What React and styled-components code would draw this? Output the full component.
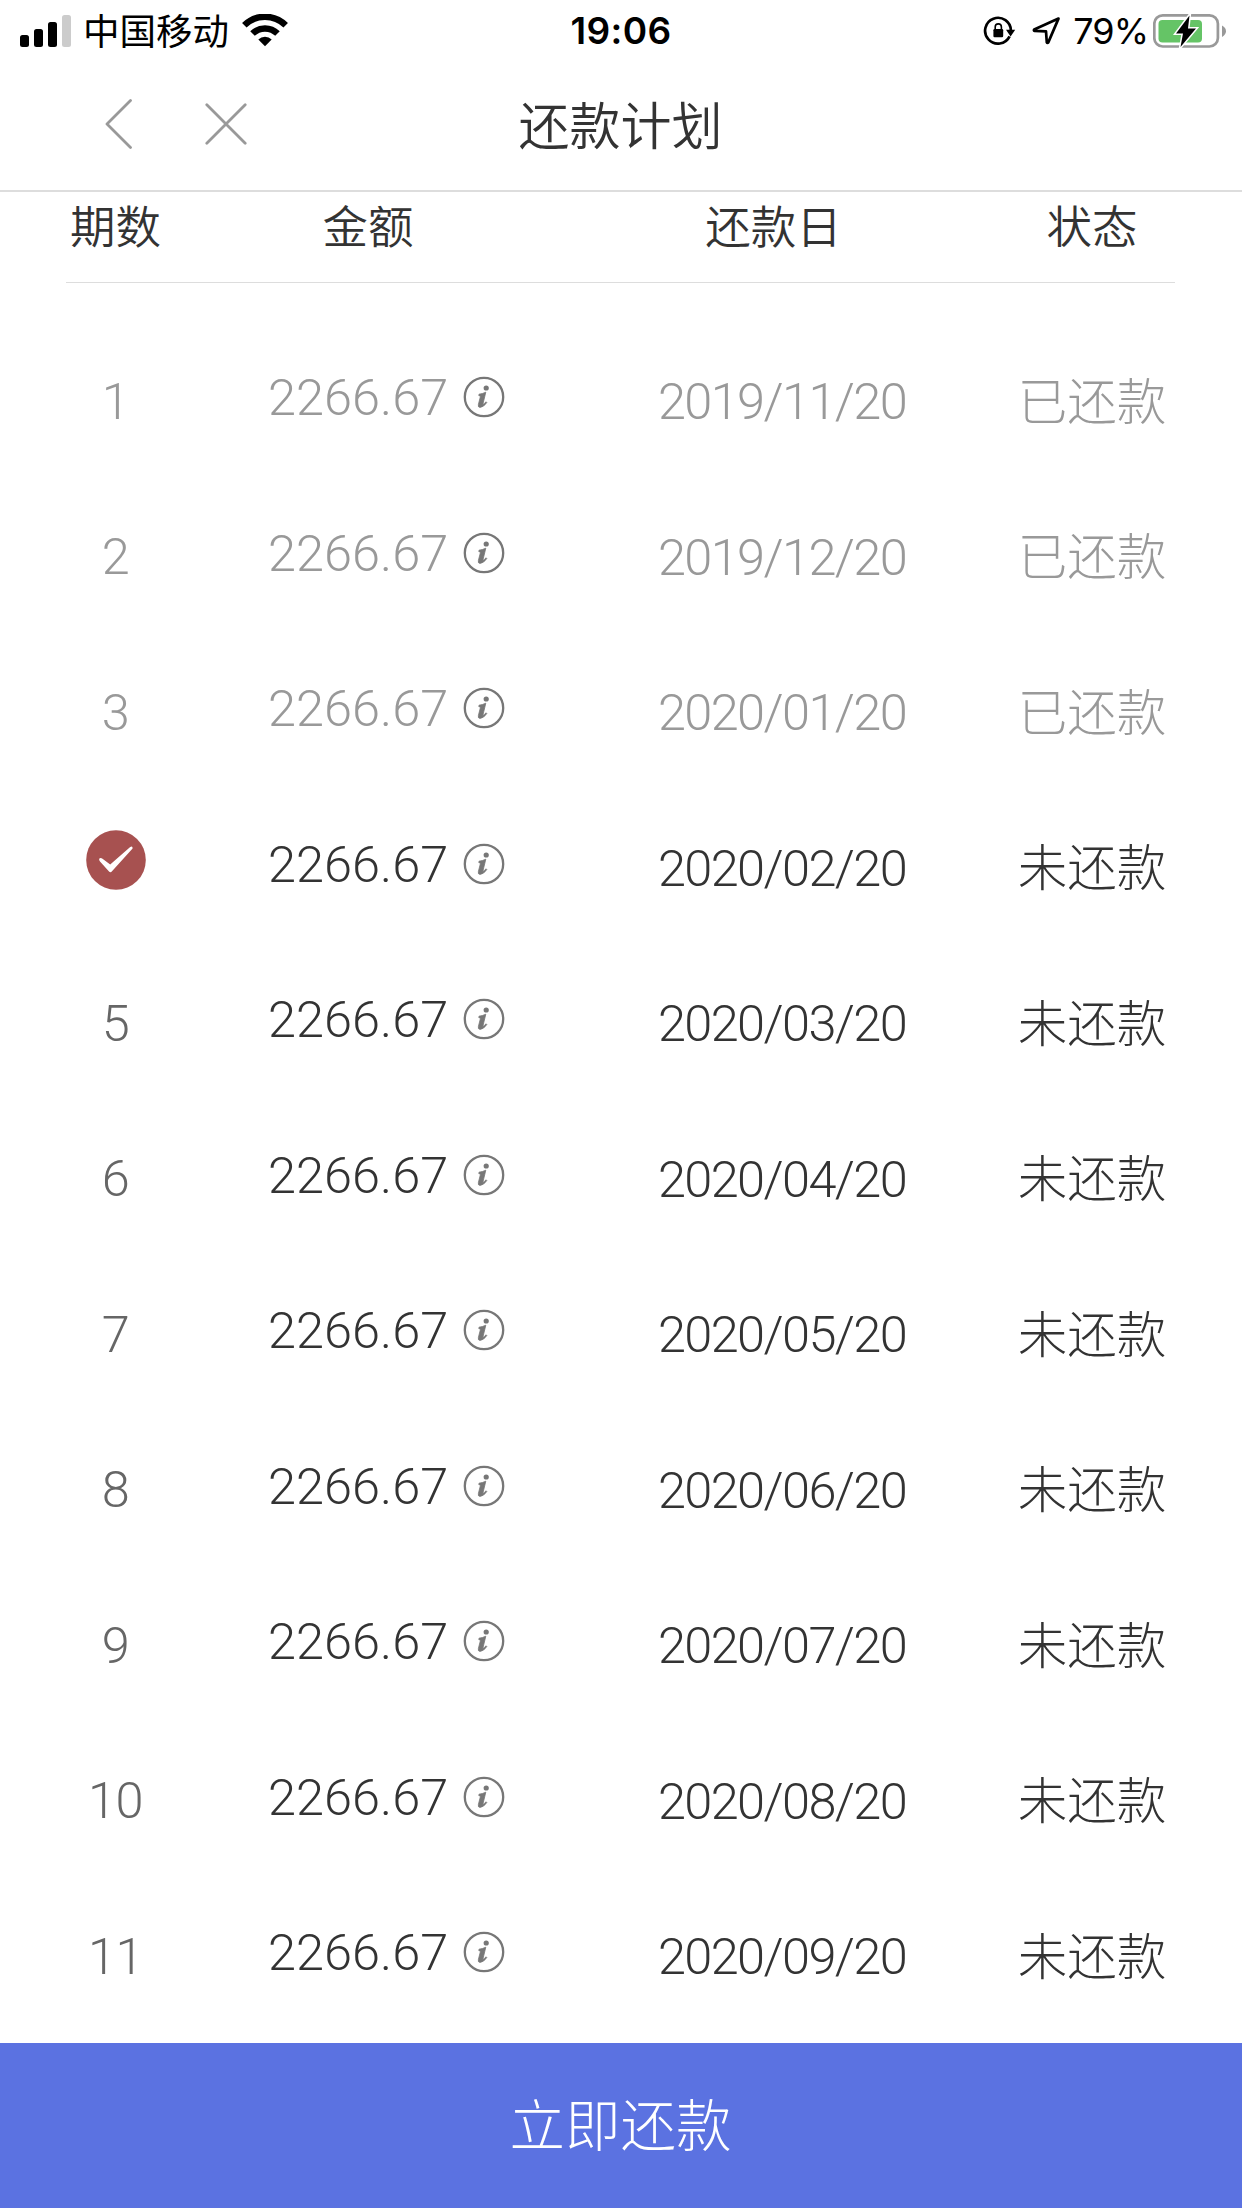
import React from 'react';
import styled, { createGlobalStyle } from 'styled-components';

const { useState } = React;

const GlobalStyle = createGlobalStyle`
  * {
    box-sizing: border-box;
  }
  body {
    margin: 0;
    background: #fff;
  }
`;

const Page = styled.div`
  display: flex;
  flex-direction: column;
  width: 1242px;
  height: 2208px;
  overflow: hidden;
  background: #fff;
  color: #333;
  font-family: 'Inter', 'Noto Sans CJK SC', sans-serif;
`;

const StatusBar = styled.div`
  display: grid;
  grid-template-columns: 1fr auto 1fr;
  align-items: center;
  flex: none;
  height: 62px;
  padding: 0 16px 0 20px;
  color: #000;
`;

const StatusLeft = styled.div`
  display: flex;
  align-items: center;
`;

const StatusRight = styled.div`
  display: flex;
  align-items: center;
  justify-content: flex-end;
`;

const Carrier = styled.span`
  margin: 0 13px 0 12px;
  padding-bottom: 3px;
  font-family: 'Noto Sans CJK SC', sans-serif;
  font-size: 36.5px;
  font-weight: 400;
  line-height: 59px;
`;

const Clock = styled.span`
  padding-right: 4px;
  font-size: 37px;
  font-weight: 600;
  line-height: 62px;
  letter-spacing: 0.4px;
`;

const BatteryLevel = styled.span`
  margin: 0 5px 0 12px;
  font-size: 36px;
  line-height: 62px;
  letter-spacing: -1px;
`;

const NavBar = styled.header`
  display: grid;
  grid-template-columns: 1fr auto 1fr;
  align-items: center;
  flex: none;
  height: 130px;
  border-bottom: 2px solid #ddd;
`;

const NavActions = styled.div`
  display: flex;
  align-items: center;
  gap: 72px;
  padding: 0 0 4px 105px;
`;

const IconButton = styled.button`
  display: flex;
  padding: 0;
  border: none;
  background: none;
  cursor: pointer;
`;

const NavTitle = styled.h1`
  margin: 0;
  padding: 0 1px 5px 0;
  font-family: 'Noto Sans CJK SC', sans-serif;
  font-size: 51px;
  font-weight: 350;
  line-height: 123px;
`;

const Plan = styled.main`
  flex: 1;
  min-height: 0;
  padding: 0 67px 0 66px;
  overflow: hidden;
`;

const PlanGrid = styled.div`
  display: grid;
  grid-template-columns: 115px 374px 454px 166px;
`;

const PlanHead = styled(PlanGrid)`
  height: 91px;
  padding-bottom: 26px;
  border-bottom: 1px solid #ddd;
  font-family: 'Noto Sans CJK SC', sans-serif;
  font-size: 45.5px;
  font-weight: 350;
  line-height: 64px;
  white-space: nowrap;
`;

const PlanRows = styled.div`
  padding-top: 40px;
`;

const PlanRow = styled(PlanGrid)`
  height: 155.5px;
  align-items: center;
  font-family: 'Roboto', 'Noto Sans CJK SC', sans-serif;
  font-size: 50.5px;
  font-weight: 300;
  white-space: nowrap;
  color: ${(props) => (props.$paid ? '#999' : '#333')};
`;

const Cell = styled.div`
  display: flex;
  align-items: center;
  justify-content: center;
`;

const IndexCell = styled(Cell)`
  padding-right: 16px;
`;

const DateHeadCell = styled(Cell)`
  padding-right: 17px;
`;

const Period = styled.span`
  padding-top: 1px;
  letter-spacing: -0.5px;
  color: ${(props) => (props.$paid ? '#999' : '#666')};
`;

const CheckedMark = styled.span`
  display: flex;
  margin-bottom: 15px;
`;

const AmountCell = styled(Cell)`
  justify-content: flex-start;
  padding: 0 0 7px 87px;
`;

const Amount = styled.span`
  width: 195px;
  padding-top: 1px;
`;

const DateText = styled.span`
  padding-top: 2px;
  letter-spacing: -1.6px;
`;

const StatusText = styled.span`
  padding-bottom: 4px;
  font-family: 'Noto Sans CJK SC', sans-serif;
  font-size: 49.5px;
  line-height: 70px;
`;

const PayButton = styled.button`
  flex: none;
  height: 165px;
  padding: 0 1px 8px 0;
  border: none;
  background: #5b72e1;
  color: #fff;
  font-family: 'Noto Sans CJK SC', sans-serif;
  font-size: 55.5px;
  font-weight: 300;
  cursor: pointer;
`;

const PERIODS = [
  { no: 1, date: '2019/11/20', paid: true },
  { no: 2, date: '2019/12/20', paid: true },
  { no: 3, date: '2020/01/20', paid: true },
  { no: 4, date: '2020/02/20', paid: false },
  { no: 5, date: '2020/03/20', paid: false },
  { no: 6, date: '2020/04/20', paid: false },
  { no: 7, date: '2020/05/20', paid: false },
  { no: 8, date: '2020/06/20', paid: false },
  { no: 9, date: '2020/07/20', paid: false },
  { no: 10, date: '2020/08/20', paid: false },
  { no: 11, date: '2020/09/20', paid: false },
];

const AMOUNT = '2266.67';

function SignalIcon() {
  return (
    <svg width="51" height="32" viewBox="0 0 51 32">
      <rect x="0" y="20" width="9" height="12" rx="2.5" />
      <rect x="14" y="14" width="9" height="18" rx="2.5" />
      <rect x="28" y="7" width="9" height="25" rx="2.5" />
      <rect x="42" y="0" width="9" height="32" rx="2.5" fill="#ccc" />
    </svg>
  );
}

function WifiIcon() {
  return (
    <svg width="46" height="34" viewBox="0 0 46 34">
      <g fill="none" stroke="#000" strokeWidth="6.4">
        <path d="M2.3 11.3A29.4 29.4 0 0 1 43.7 11.3" />
        <path d="M10.5 19.6A17.7 17.7 0 0 1 35.5 19.6" />
      </g>
      <path d="M23 32.2L16.3 25.5A9.5 9.5 0 0 1 29.7 25.5Z" />
    </svg>
  );
}

function RotationLockIcon() {
  return (
    <svg width="33" height="32" viewBox="0 0 33 32">
      <path d="M26.6 21.4A12.9 12.9 0 1 1 27.9 16" fill="none" stroke="#000" strokeWidth="2.7" />
      <path d="M23 14.8H32.2L27.6 21.6Z" />
      <rect x="10.4" y="14" width="9.8" height="8.3" rx="1.2" />
      <path d="M12.2 14.5V12A3.1 3.1 0 0 1 18.4 12V14.5" fill="none" stroke="#000" strokeWidth="1.6" />
    </svg>
  );
}

const LocationSvg = styled.svg`
  margin-left: 15px;
`;

function LocationIcon() {
  return (
    <LocationSvg width="30" height="30" viewBox="0 0 30 30">
      <path
        d="M27.5 2.6L3.2 13.4Q2.4 14.6 3.6 14.9L15 15.3L15.8 26.4Q16.4 27.6 17.3 26.4Z"
        fill="none"
        stroke="#000"
        strokeWidth="2.7"
        strokeLinejoin="round"
      />
    </LocationSvg>
  );
}

function BatteryIcon() {
  return (
    <svg width="73" height="36" viewBox="0 0 73 36">
      <rect x="1.3" y="2.3" width="63.6" height="31.2" rx="8.5" fill="none" stroke="#999" strokeWidth="2.7" />
      <path d="M69 12.5V24Q73 21.5 73 18.2T69 12.5Z" fill="#999" />
      <rect x="5.5" y="7" width="43.5" height="22.5" rx="4" fill="#65c466" />
      <path
        d="M36.5 2.5L23 20.5H30L27.5 34L43 15.5H35Z"
        stroke="#fff"
        strokeWidth="3"
        paintOrder="stroke"
      />
    </svg>
  );
}

function BackIcon() {
  return (
    <svg width="28" height="50" viewBox="0 0 28 50" fill="none" stroke="#999" strokeWidth="2.8" strokeLinecap="round" strokeLinejoin="round">
      <path d="M25.5 1.6L2 25L25.5 48.4" />
    </svg>
  );
}

function CloseIcon() {
  return (
    <svg width="42" height="42" viewBox="0 0 42 42" fill="none" stroke="#999" strokeWidth="2.8" strokeLinecap="round">
      <path d="M1.8 1.8L40.2 40.2M40.2 1.8L1.8 40.2" />
    </svg>
  );
}

function InfoIcon() {
  return (
    <svg width="42" height="42" viewBox="0 0 42 42">
      <circle cx="21" cy="21" r="19.2" fill="none" stroke="#777" strokeWidth="2.3" />
      <circle cx="23.2" cy="12" r="2.6" fill="#777" />
      <path
        d="M16 18.2Q19.5 17.8 22.8 16.2L19.8 28.6Q21 28.2 23 25.8L23.8 26.6Q20.5 31.4 17 31.4Q14.7 31.2 15.4 28.4L17.5 20.2L15.8 19.6Z"
        fill="#777"
        stroke="#777"
        strokeWidth="0.8"
      />
    </svg>
  );
}

function CheckedIcon() {
  return (
    <svg width="60" height="60" viewBox="0 0 60 60">
      <circle cx="30" cy="30" r="29.8" fill="#a75150" />
      <path d="M13.2 28.8Q14.5 27 16.5 28.8L24.2 34.6L44.2 17Q46.8 15.6 46.6 18.6L26 41.2Q24.5 43.2 22.8 41.2L14 31.5Q12.8 30 13.2 28.8Z" fill="#fff" />
    </svg>
  );
}

function App() {
  const [selected, setSelected] = useState(4);

  return (
    <Page>
      <GlobalStyle />
      <StatusBar>
        <StatusLeft>
          <SignalIcon />
          <Carrier>中国移动</Carrier>
          <WifiIcon />
        </StatusLeft>
        <Clock>19:06</Clock>
        <StatusRight>
          <RotationLockIcon />
          <LocationIcon />
          <BatteryLevel>79%</BatteryLevel>
          <BatteryIcon />
        </StatusRight>
      </StatusBar>

      <NavBar>
        <NavActions>
          <IconButton type="button" aria-label="返回"><BackIcon /></IconButton>
          <IconButton type="button" aria-label="关闭"><CloseIcon /></IconButton>
        </NavActions>
        <NavTitle>还款计划</NavTitle>
      </NavBar>

      <Plan>
        <PlanHead>
          <IndexCell>期数</IndexCell>
          <Cell>金额</Cell>
          <DateHeadCell>还款日</DateHeadCell>
          <Cell>状态</Cell>
        </PlanHead>
        <PlanRows>
          {PERIODS.map((period) => (
            <PlanRow
              key={period.no}
              $paid={period.paid}
              onClick={() => !period.paid && setSelected(period.no)}
            >
              <IndexCell>
                {selected === period.no ? (
                  <CheckedMark><CheckedIcon /></CheckedMark>
                ) : (
                  <Period $paid={period.paid}>{period.no}</Period>
                )}
              </IndexCell>
              <AmountCell>
                <Amount>{AMOUNT}</Amount>
                <InfoIcon />
              </AmountCell>
              <Cell><DateText>{period.date}</DateText></Cell>
              <Cell><StatusText>{period.paid ? '已还款' : '未还款'}</StatusText></Cell>
            </PlanRow>
          ))}
        </PlanRows>
      </Plan>

      <PayButton type="button">立即还款</PayButton>
    </Page>
  );
}

export default App;
